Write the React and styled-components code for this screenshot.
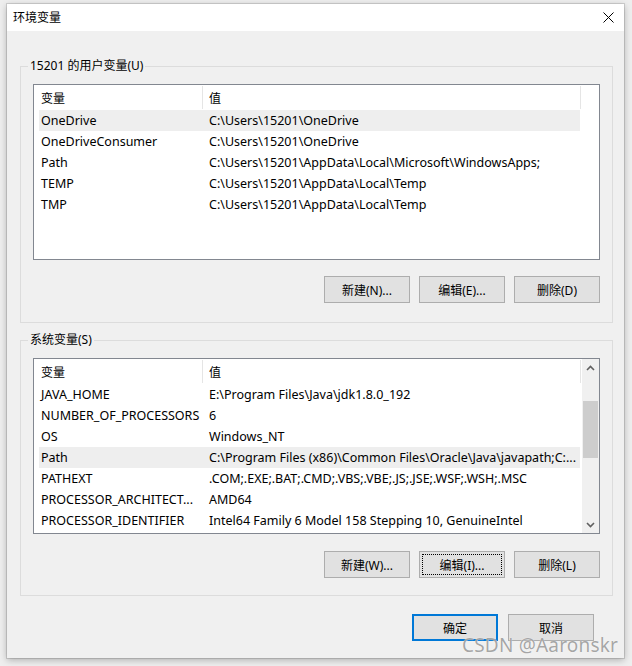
import React from 'react';
import styled, { createGlobalStyle } from 'styled-components';

const GlobalStyle = createGlobalStyle`
  html, body {
    margin: 0;
    padding: 0;
  }
  body {
    background: #eeeeee;
    font-family: "Noto Sans", "Noto Sans CJK SC", sans-serif;
    font-size: 12px;
    color: #000;
  }
`;

const Desktop = styled.div`
  position: relative;
  width: 632px;
  height: 666px;
  overflow: hidden;
  box-sizing: border-box;
  padding: 4px 8px 0 7px;
  background: #eeeeee;
`;

const Dialog = styled.div`
  width: 617px;
  height: 654px;
  background: #f0f0f0;
  box-shadow: 0 0 0 1px rgba(0, 0, 0, 0.12), 0 2px 7px rgba(0, 0, 0, 0.28);
  display: flex;
  flex-direction: column;
`;

const TitleBar = styled.div`
  height: 27px;
  flex: none;
  background: #fff;
  display: flex;
  align-items: center;
  justify-content: space-between;
  padding: 0 10px 0 6px;
`;

const Title = styled.span`
  font-size: 12px;
  line-height: 16px;
`;

const Group = styled.fieldset`
  margin: ${props => props.$top}px 11px 0 13px;
  padding: 10px 12px ${props => props.$bottom}px 12px;
  border: 1px solid #dcdcdc;
  min-width: 0;
`;

const GroupLabel = styled.legend`
  margin-left: -5px;
  padding: 0 2px;
  line-height: 16px;
  font-size: 12px;
`;

const ListView = styled.div`
  height: 176px;
  box-sizing: border-box;
  border: 1px solid #828790;
  background: #fff;
  display: flex;
`;

const ListContent = styled.div`
  flex: 1;
  overflow: hidden;
`;

const HeaderRow = styled.div`
  display: grid;
  grid-template-columns: 169px 378px;
  height: 25px;
`;

const HeaderCell = styled.div`
  box-sizing: border-box;
  padding-left: ${props => props.$pad}px;
  border-right: 1px solid #e5e5e5;
  margin-top: 1px;
  height: 23px;
  display: flex;
  align-items: center;
  font-size: 12px;
`;

const Row = styled.div`
  display: grid;
  grid-template-columns: 163px 378px;
  margin-left: 5px;
  width: 541px;
  height: 21px;
  background: ${props => props.$selected ? '#eeeeee' : 'transparent'};
`;

const Cell = styled.div`
  padding-left: ${props => props.$pad}px;
  font-size: 12.5px;
  line-height: 21px;
  white-space: nowrap;
  overflow: hidden;
`;

const ScrollBar = styled.div`
  width: 17px;
  flex: none;
  background: #f0f0f0;
  display: flex;
  flex-direction: column;
`;

const ScrollArrow = styled.div`
  height: 17px;
  display: flex;
  align-items: center;
  justify-content: center;
`;

const ScrollTrack = styled.div`
  flex: 1;
`;

const ScrollThumb = styled.div`
  margin: ${props => props.$offset}px 1px 0 1px;
  height: ${props => props.$size}px;
  background: #cdcdcd;
`;

const ButtonRow = styled.div`
  display: flex;
  justify-content: flex-end;
  gap: ${props => props.$gap}px;
  margin-top: ${props => props.$top}px;
  padding-right: ${props => props.$right || 0}px;
`;

const Button = styled.button`
  position: relative;
  width: 86px;
  height: 27px;
  box-sizing: border-box;
  margin: 0;
  padding: 0;
  font-family: "Noto Sans", "Noto Sans CJK SC", sans-serif;
  font-size: 12px;
  color: #000;
  background: #e1e1e1;
  border: ${props => props.$primary ? '2px solid #0078d7' : '1px solid #adadad'};
  display: flex;
  align-items: center;
  justify-content: center;
`;

const FocusRing = styled.span`
  position: absolute;
  inset: 2px;
  border: 1px dotted #000;
  pointer-events: none;
`;

const Watermark = styled.div`
  position: absolute;
  left: 462px;
  top: 632px;
  font-family: "Noto Sans", sans-serif;
  font-size: 19px;
  letter-spacing: 0.2px;
  color: rgba(150, 150, 150, 0.85);
  text-shadow: 0 0 1px rgba(255, 255, 255, 0.9);
  white-space: nowrap;
`;

const CloseIcon = () => (
  <svg width="11" height="11" viewBox="0 0 11 11">
    <path d="M0.5 0.5 L10.5 10.5 M10.5 0.5 L0.5 10.5" stroke="#000" strokeWidth="1" fill="none" />
  </svg>
);

const Chevron = ({ down }) => (
  <svg width="9" height="6" viewBox="0 0 9 6">
    <path
      d={down ? 'M1 1 L4.5 4.5 L8 1' : 'M1 5 L4.5 1.5 L8 5'}
      stroke="#606060"
      strokeWidth="1.6"
      fill="none"
    />
  </svg>
);

const userVars = [
  ['OneDrive', 'C:\\Users\\15201\\OneDrive'],
  ['OneDriveConsumer', 'C:\\Users\\15201\\OneDrive'],
  ['Path', 'C:\\Users\\15201\\AppData\\Local\\Microsoft\\WindowsApps;'],
  ['TEMP', 'C:\\Users\\15201\\AppData\\Local\\Temp'],
  ['TMP', 'C:\\Users\\15201\\AppData\\Local\\Temp'],
];

const systemVars = [
  ['JAVA_HOME', 'E:\\Program Files\\Java\\jdk1.8.0_192'],
  ['NUMBER_OF_PROCESSORS', '6'],
  ['OS', 'Windows_NT'],
  ['Path', 'C:\\Program Files (x86)\\Common Files\\Oracle\\Java\\javapath;C:...'],
  ['PATHEXT', '.COM;.EXE;.BAT;.CMD;.VBS;.VBE;.JS;.JSE;.WSF;.WSH;.MSC'],
  ['PROCESSOR_ARCHITECT...', 'AMD64'],
  ['PROCESSOR_IDENTIFIER', 'Intel64 Family 6 Model 158 Stepping 10, GenuineIntel'],
];

function VarList({ rows, selected, scroll }) {
  return (
    <ListView>
      <ListContent>
        <HeaderRow>
          <HeaderCell $pad={7}>变量</HeaderCell>
          <HeaderCell $pad={6}>值</HeaderCell>
        </HeaderRow>
        {rows.map(([name, value], i) => (
          <Row key={name + i} $selected={i === selected}>
            <Cell $pad={2}>{name}</Cell>
            <Cell $pad={7}>{value}</Cell>
          </Row>
        ))}
      </ListContent>
      {scroll && (
        <ScrollBar>
          <ScrollArrow><Chevron /></ScrollArrow>
          <ScrollTrack>
            <ScrollThumb $offset={25} $size={57} />
          </ScrollTrack>
          <ScrollArrow><Chevron down /></ScrollArrow>
        </ScrollBar>
      )}
    </ListView>
  );
}

export default function App() {
  return (
    <>
      <GlobalStyle />
      <Desktop>
        <Dialog>
          <TitleBar>
            <Title>环境变量</Title>
            <CloseIcon />
          </TitleBar>

          <Group $top={27} $bottom={19}>
            <GroupLabel>15201 的用户变量(U)</GroupLabel>
            <VarList rows={userVars} selected={0} />
            <ButtonRow $gap={9} $top={16}>
              <Button>新建(N)...</Button>
              <Button>编辑(E)...</Button>
              <Button>删除(D)</Button>
            </ButtonRow>
          </Group>

          <Group $top={9} $bottom={17}>
            <GroupLabel>系统变量(S)</GroupLabel>
            <VarList rows={systemVars} selected={3} scroll />
            <ButtonRow $gap={9} $top={17}>
              <Button>新建(W)...</Button>
              <Button>编辑(I)...<FocusRing /></Button>
              <Button>删除(L)</Button>
            </ButtonRow>
          </Group>

          <ButtonRow $gap={10} $top={18} $right={30}>
            <Button $primary>确定</Button>
            <Button>取消</Button>
          </ButtonRow>
        </Dialog>
        <Watermark>CSDN @Aaronskr</Watermark>
      </Desktop>
    </>
  );
}
